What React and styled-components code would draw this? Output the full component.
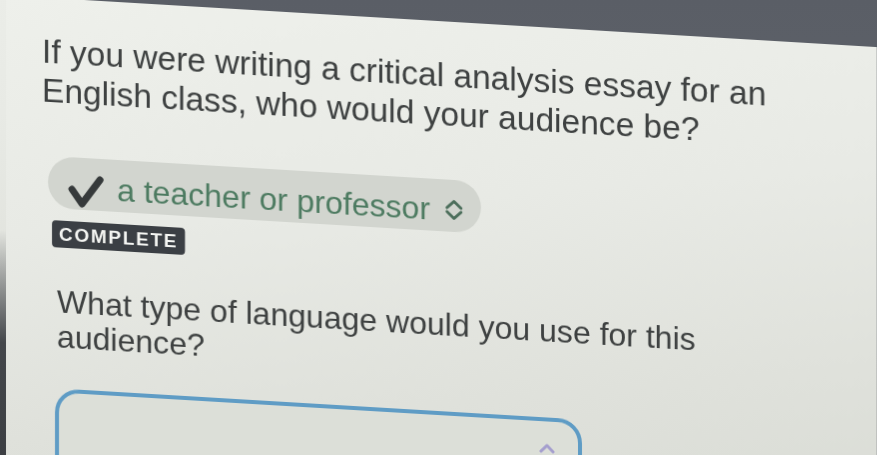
import React from "react";
import styled, { createGlobalStyle } from "styled-components";

const Global = createGlobalStyle`
  html, body {
    margin: 0;
    padding: 0;
    background: #5c6068;
  }
`;

const Screen = styled.div`
  width: 877px;
  height: 455px;
  overflow: hidden;
  background: linear-gradient(180deg, #5a5e66 0%, #666a70 100%);
  font-family: "Liberation Sans", Arial, sans-serif;
`;

const Page = styled.div`
  margin-top: -5px;
  height: 560px;
  transform: skewY(3.4deg);
  transform-origin: 0 0;
  border-left: 6px solid;
  border-image: linear-gradient(180deg, rgba(60, 62, 66, 0) 42%, #44474b 62%, #35383c 100%) 1;
  background: linear-gradient(172deg, #eef0eb 0%, #e8eae5 35%, #dfe1db 65%, #d6d9d2 100%);
  padding: 34px 0 0 36px;
  box-sizing: border-box;
  filter: blur(0.45px);
`;

const Question = styled.p`
  margin: ${(p) => p.$mt || 0}px 0 0 ${(p) => p.$indent || 0}px;
  font-size: ${(p) => p.$size}px;
  line-height: ${(p) => p.$lh}px;
  color: #3e4141;
  white-space: nowrap;
`;

const Select = styled.div`
  display: flex;
  align-items: center;
  width: fit-content;
  margin: 46px 0 0 6px;
  height: 52px;
  box-sizing: border-box;
  padding: 8px 16px 0 18px;
  border-radius: 26px;
  background: #d2d5cf;
`;

const Check = styled.svg`
  width: 38px;
  height: 34px;
  margin: 8px 13px 0 0;
  flex: none;
`;

const Answer = styled.span`
  font-size: 32px;
  color: #4d7b61;
  white-space: nowrap;
`;

const Chevrons = styled.svg`
  width: 22px;
  height: 24px;
  margin-left: 13px;
  flex: none;
`;

const Badge = styled.div`
  width: fit-content;
  margin: 12px 0 0 10px;
  padding: 0 7px;
  height: 27px;
  line-height: 28px;
  border-radius: 4px;
  background: #3b3f44;
  color: #f4f5f2;
  font-size: 19px;
  font-weight: 700;
  letter-spacing: 1.7px;
`;

const Input = styled.div`
  display: flex;
  justify-content: flex-end;
  margin: 34px 0 0 13px;
  width: 527px;
  height: 90px;
  box-sizing: border-box;
  padding: 20px 22px 0 0;
  border: 4.5px solid #5f9cc5;
  border-radius: 24px;
  background: #dcdfd8;
`;

const Caret = styled.svg`
  width: 18px;
  height: 12px;
`;

export default function App() {
  return (
    <Screen>
      <Global />
      <Page>
        <Question $size={33.5} $lh={39}>
          If you were writing a critical analysis essay for an
          <br />
          English class, who would your audience be?
        </Question>

        <Select>
          <Check viewBox="0 0 38 34">
            <path
              d="M6 15 L16 29 L34 4"
              fill="none"
              stroke="#363a3b"
              strokeWidth="7"
              strokeLinecap="round"
              strokeLinejoin="round"
            />
          </Check>
          <Answer>a teacher or professor</Answer>
          <Chevrons viewBox="0 0 22 24">
            <path
              d="M4 10 L11 3.5 L18 10 M4 14 L11 20.5 L18 14"
              fill="none"
              stroke="#4c6e5b"
              strokeWidth="3"
              strokeLinecap="round"
              strokeLinejoin="round"
            />
          </Chevrons>
        </Select>

        <Badge>COMPLETE</Badge>

        <Question $size={32} $lh={35} $mt={37} $indent={15}>
          What type of language would you use for this
          <br />
          audience?
        </Question>

        <Input>
          <Caret viewBox="0 0 18 12">
            <path
              d="M3 10 L9 4 L15 10"
              fill="none"
              stroke="#a59fce"
              strokeWidth="3"
              strokeLinecap="round"
              strokeLinejoin="round"
            />
          </Caret>
        </Input>
      </Page>
    </Screen>
  );
}
